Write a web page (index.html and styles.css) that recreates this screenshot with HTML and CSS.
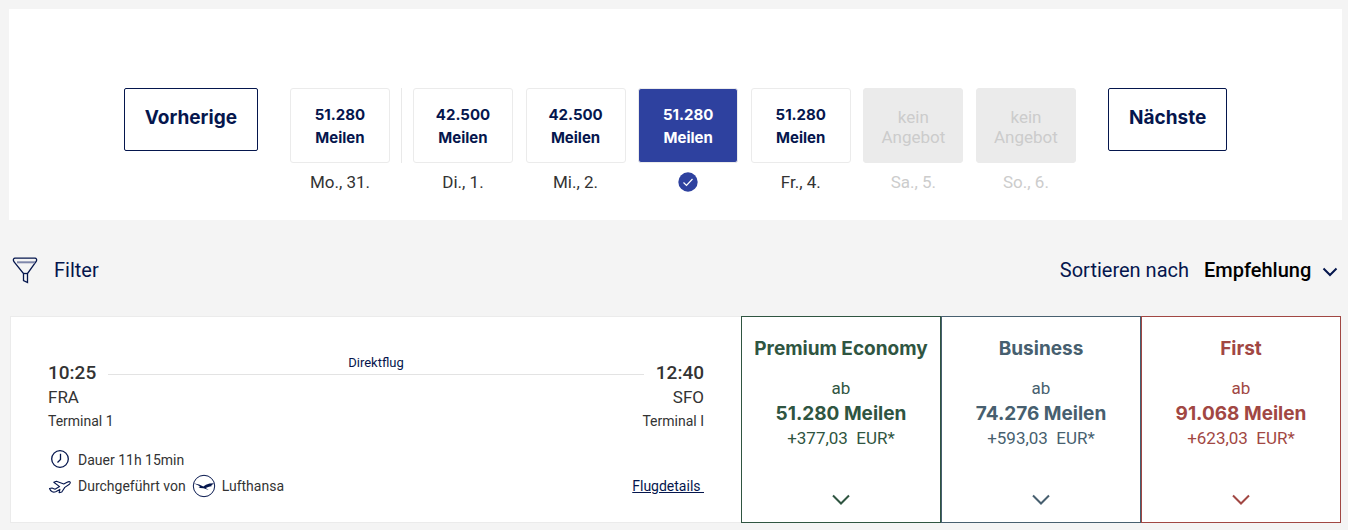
FILE: index.html
```html
<!DOCTYPE html>
<html lang="de">
<head>
    <meta charset="UTF-8">
    <meta name="viewport" content="width=device-width, initial-scale=1.0">
    <title>Flug auswählen</title>

    <link rel="stylesheet" href="styles.css">
</head>
<body>
    <section class="calendar">
        <button class="nav-button">Vorherige</button>

        <div class="days">
            <div class="day">
                <button class="day-price">51.280<br>Meilen</button>
                <p>Mo., 31.</p>
            </div>
            <div class="month-line"></div>
            <div class="month">
                <div class="day">
                    <button class="day-price">42.500<br>Meilen</button>
                    <p>Di., 1.</p>
                </div>
                <div class="day">
                    <button class="day-price">42.500<br>Meilen</button>
                    <p>Mi., 2.</p>
                </div>
                <div class="day selected">
                    <button class="day-price">51.280<br>Meilen</button>
                    <p>
                        <svg width="20" height="20" viewBox="0 0 20 20">
                            <circle cx="10" cy="10" r="9.7" fill="#2e419f"/>
                            <path d="M5.5 10.5l3 2.9 6-6.4" fill="none" stroke="#fff" stroke-width="1.2"/>
                        </svg>
                    </p>
                </div>
                <div class="day">
                    <button class="day-price">51.280<br>Meilen</button>
                    <p>Fr., 4.</p>
                </div>
                <div class="day empty">
                    <button class="day-price" disabled>kein<br>Angebot</button>
                    <p>Sa., 5.</p>
                </div>
                <div class="day empty">
                    <button class="day-price" disabled>kein<br>Angebot</button>
                    <p>So., 6.</p>
                </div>
            </div>
        </div>

        <button class="nav-button">Nächste</button>
    </section>

    <div class="toolbar">
        <button class="filter">
            <svg width="26" height="28" viewBox="0 0 26 28" fill="none" stroke="#05164d" stroke-width="1.3">
                <path d="M3 2.2h20c1.3 0 2 1.3 1.5 2.5-.3.8-.7 1.3-1.2 1.9L15.5 17.5v9l-4-2v-7L2.7 6.6C2.2 6 1.8 5.5 1.5 4.7 1 3.5 1.7 2.2 3 2.2z"/>
                <path d="M11.5 17.5h4"/>
                <path d="M5 6.3h18" stroke="#7f87aa" stroke-width="2"/>
            </svg>
            Filter
        </button>

        <div class="sort">
            <label for="sort">Sortieren nach</label>
            <div class="select">
                <select id="sort">
                    <option>Empfehlung</option>
                </select>
                <svg class="arrow" width="16" height="10" viewBox="0 0 16 10">
                    <path d="M1.5 1.5L8 8l6.5-6.5"/>
                </svg>
            </div>
        </div>
    </div>

    <article class="flight">
        <div class="info">
            <div class="route">
                <p class="time">10:25</p>
                <p class="stops">Direktflug</p>
                <p class="time">12:40</p>
            </div>
            <div class="row code">
                <p>FRA</p>
                <p>SFO</p>
            </div>
            <div class="row terminal">
                <p>Terminal 1</p>
                <p>Terminal I</p>
            </div>

            <div class="details">
                <p class="detail">
                    <svg class="icon" width="24" height="20" viewBox="0 0 24 20" fill="none" stroke="#05164d" stroke-width="1.3">
                        <circle cx="12" cy="9" r="8.3"/>
                        <path d="M12.5 3.8v5.7l-3 3"/>
                    </svg>
                    Dauer 11h 15min
                </p>
                <div class="row">
                    <p class="detail">
                        <svg class="icon" width="24" height="20" viewBox="0 0 24 20" fill="none" stroke="#05164d" stroke-width="1.1" stroke-linejoin="round">
                            <path d="M1.500 12.500l2.500-.5 3 1.200 4.600-2.600-5.800-4.400 2.600-.9 7.400 2.700 3.300-1.800c1.200-.6 2.500-.7 3.100-.1.500.7-.1 1.500-.8 2.100l-4.600 3.200-3 4.600-2.700.7.800-3.300-4.200 2.300c-2.100 1-5 .3-6.200-3.200z"/>
                        </svg>
                        Durchgeführt von
                        <svg class="crane" width="24" height="24" viewBox="0 0 24 24">
                            <circle cx="12" cy="12" r="10.7" fill="none" stroke="#05164d" stroke-width="1"/>
                            <path d="M1.5 9.2l5.600 1.400 4.200 2 2.700-1.900 3.600-1.200 4.900-.3-2.900 1.300 1.900.1-2.600 1 1.300.4-3.200.8-3.300 1.200 3 2-5.200-1.700-3.300-.2-1.700-1 1.700-.3-2.200-1.500z" fill="#05164d"/>
                        </svg>
                        Lufthansa
                    </p>
                    <a href="#" class="more">Flugdetails&nbsp;</a>
                </div>
            </div>
        </div>

        <button class="cabin premium">
            <span class="cabin-name">Premium Economy</span>
            <span>ab</span>
            <span class="miles">51.280 Meilen</span>
            <span>+377,03&nbsp; EUR*</span>
            <svg class="arrow" width="18" height="12" viewBox="0 0 18 12">
                <path d="M1 1.5l8 8 8-8"/>
            </svg>
        </button>
        <button class="cabin business">
            <span class="cabin-name">Business</span>
            <span>ab</span>
            <span class="miles">74.276 Meilen</span>
            <span>+593,03&nbsp; EUR*</span>
            <svg class="arrow" width="18" height="12" viewBox="0 0 18 12">
                <path d="M1 1.5l8 8 8-8"/>
            </svg>
        </button>
        <button class="cabin first">
            <span class="cabin-name">First</span>
            <span>ab</span>
            <span class="miles">91.068 Meilen</span>
            <span>+623,03&nbsp; EUR*</span>
            <svg class="arrow" width="18" height="12" viewBox="0 0 18 12">
                <path d="M1 1.5l8 8 8-8"/>
            </svg>
        </button>
    </article>
</body>
</html>
```
FILE: styles.css
```css
* {
    padding: 0;
    margin: 0;
    box-sizing: border-box;
}

body {
    padding: 9px 6px 7px 9px;
    background-color: #f4f4f4;
    color: #333;
    font-family: Roboto, "Liberation Sans", sans-serif;
    font-size: 14px;
}

button,
select {
    background: none;
    border: none;
    font-family: inherit;
    cursor: pointer;
}

svg {
    flex-shrink: 0;
}

/* calendar */
.calendar {
    display: flex;
    justify-content: center;
    align-items: flex-start;
    gap: 32px;
    padding: 79px 16px 28px;
    background-color: white;
}

.nav-button {
    height: 63px;
    padding: 0 20px 4px;
    border: 1px solid #05164d;
    border-radius: 2px;
    color: #05164d;
    font-family: Inter, sans-serif;
    font-size: 19px;
    font-weight: 700;
}

.days {
    display: flex;
    flex: 0 1 786px;
}

.month {
    display: flex;
    flex: 1;
    justify-content: space-between;
}

.month-line {
    width: 1px;
    height: 75px;
    margin: 0 11px;
    background-color: #e9e9e9;
}

.day {
    width: 100px;
    text-align: center;
}

.day-price {
    width: 100%;
    height: 75px;
    border: 1px solid #ebebeb;
    border-radius: 3px;
    color: #05164d;
    font-family: Inter, sans-serif;
    font-size: 15px;
    font-weight: 700;
    line-height: 23px;
}

.day p {
    display: flex;
    justify-content: center;
    height: 20px;
    margin-top: 9px;
    font-size: 17px;
    line-height: 20px;
}

.selected .day-price {
    background-color: #2e419f;
    color: white;
}

.empty .day-price {
    background-color: #ebebeb;
    font-family: inherit;
    font-size: 17px;
    font-weight: 400;
    line-height: 20px;
    padding-top: 3px;
}

.empty .day-price,
.empty p {
    color: #ccc;
}

/* filter and sorting */
.toolbar {
    display: flex;
    justify-content: space-between;
    align-items: center;
    height: 96px;
    padding: 4px 4px 0 3px;
    color: #05164d;
    font-size: 20px;
}

.filter {
    display: flex;
    align-items: center;
    gap: 16px;
    color: inherit;
    font-size: inherit;
}

.sort {
    display: flex;
    align-items: center;
    gap: 15px;
}

.select {
    position: relative;
}

.select select {
    appearance: none;
    padding-right: 26px;
    color: black;
    font-size: 20px;
    font-weight: 500;
}

.select .arrow {
    position: absolute;
    top: 9px;
    right: 0;
    pointer-events: none;
}

.arrow path {
    fill: none;
    stroke: currentColor;
    stroke-width: 2;
}

/* flight */
.flight {
    display: flex;
    margin: 0 1px;
    background-color: white;
}

.info {
    flex: 1;
    padding: 44px 37px 23px;
    border: 1px solid #ebebeb;
    border-right: none;
}

.route {
    display: flex;
    gap: 12px;
    line-height: 24px;
}

.row {
    display: flex;
    justify-content: space-between;
    align-items: center;
}

.time {
    font-size: 19px;
    font-weight: 500;
}

.code {
    font-size: 17px;
    line-height: 24px;
}

.terminal {
    line-height: 24px;
}

.stops {
    flex: 1;
    height: 14px;
    border-bottom: 1px solid #e3e3e3;
    color: #05164d;
    font-size: 13px;
    line-height: 4px;
    text-align: center;
}

.details {
    margin-top: 14px;
}

.detail {
    display: flex;
    align-items: center;
    height: 26px;
}

.icon {
    margin-right: 6px;
}

.crane {
    margin: 0 6px;
}

.more {
    color: #05164d;
}

.cabin {
    display: flex;
    flex-direction: column;
    align-items: center;
    width: 200px;
    padding: 19px 0 16px;
    border: 1px solid;
    font-size: 17px;
    line-height: 25px;
}

.cabin-name,
.miles {
    font-family: Inter, sans-serif;
    font-size: 19px;
    font-weight: 700;
    white-space: nowrap;
}

.cabin-name {
    margin-bottom: 15px;
}

.cabin .arrow {
    margin-top: auto;
}

.premium {
    color: #2f5541;
}

.business {
    color: #475f6f;
}

.first {
    color: #a14743;
}
```
